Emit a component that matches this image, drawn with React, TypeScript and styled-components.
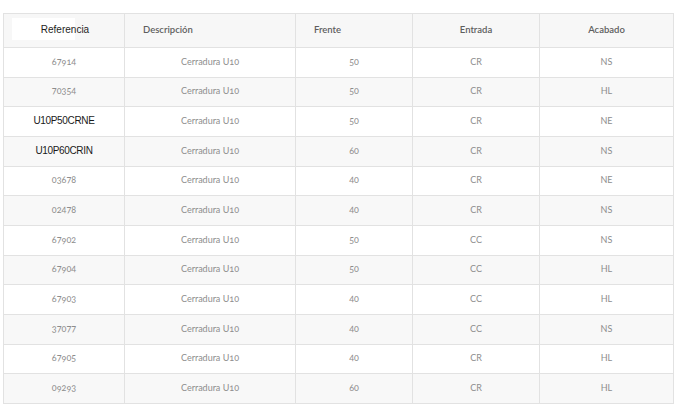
import React from "react";
import styled, { createGlobalStyle } from "styled-components";

type Item = {
  ref: string;
  desc: string;
  frente: string;
  entrada: string;
  acabado: string;
  code?: boolean;
};

const items: Item[] = [
  { ref: "67914", desc: "Cerradura U10", frente: "50", entrada: "CR", acabado: "NS" },
  { ref: "70354", desc: "Cerradura U10", frente: "50", entrada: "CR", acabado: "HL" },
  { ref: "U10P50CRNE", desc: "Cerradura U10", frente: "50", entrada: "CR", acabado: "NE", code: true },
  { ref: "U10P60CRIN", desc: "Cerradura U10", frente: "60", entrada: "CR", acabado: "NS", code: true },
  { ref: "03678", desc: "Cerradura U10", frente: "40", entrada: "CR", acabado: "NE" },
  { ref: "02478", desc: "Cerradura U10", frente: "40", entrada: "CR", acabado: "NS" },
  { ref: "67902", desc: "Cerradura U10", frente: "50", entrada: "CC", acabado: "NS" },
  { ref: "67904", desc: "Cerradura U10", frente: "50", entrada: "CC", acabado: "HL" },
  { ref: "67903", desc: "Cerradura U10", frente: "40", entrada: "CC", acabado: "HL" },
  { ref: "37077", desc: "Cerradura U10", frente: "40", entrada: "CC", acabado: "NS" },
  { ref: "67905", desc: "Cerradura U10", frente: "40", entrada: "CR", acabado: "HL" },
  { ref: "09293", desc: "Cerradura U10", frente: "60", entrada: "CR", acabado: "HL" },
];

const GlobalStyle = createGlobalStyle`
  html, body {
    margin: 0;
    background: #ffffff;
  }
  body {
    padding: 13px 4px 0 3px;
    font-family: Lato, "Open Sans", sans-serif;
  }
`;

const Table = styled.table`
  width: 670px;
  border-collapse: collapse;
  table-layout: fixed;
  border: 1px solid #e2e2e2;
`;

const HeadRow = styled.tr`
  height: 34px;
  background: #f7f7f7;
`;

const HeadCell = styled.th<{ $align?: "left" | "center" }>`
  border: 1px solid #e2e2e2;
  padding: 0 0 2px ${(p) => (p.$align === "left" ? "18px" : "0")};
  text-align: ${(p) => p.$align ?? "center"};
  font-family: Lato, sans-serif;
  font-size: 9.5px;
  font-weight: 600;
  color: #5e5e5e;
`;

// white patch behind the first header label, narrower than the text itself
const RefLabel = styled.span`
  position: relative;
  display: inline-block;
  margin-left: 2px;
  font-family: "Liberation Sans", Arial, sans-serif;
  font-size: 10px;
  font-weight: 400;
  color: #1e1e1e;
  z-index: 0;

  &::before {
    content: "";
    position: absolute;
    left: -29px;
    top: -6px;
    width: 63px;
    height: 22px;
    background: #ffffff;
    z-index: -1;
  }
`;

const Row = styled.tr<{ $shaded: boolean }>`
  height: 29.67px;
  background: ${(p) => (p.$shaded ? "#f8f8f8" : "#ffffff")};
`;

const Cell = styled.td`
  border: 1px solid #e2e2e2;
  padding: 0 0 2px;
  text-align: center;
  font-size: 9px;
  font-weight: 400;
  color: #8d8d8d;
  font-variant-numeric: oldstyle-nums;
  font-feature-settings: "onum" 1;
`;

const Code = styled.span`
  font-family: "Liberation Sans", Arial, sans-serif;
  font-size: 10px;
  letter-spacing: -0.35px;
  font-weight: 400;
  color: #1a1a1a;
`;

export default function App() {
  return (
    <>
      <GlobalStyle />
      <Table>
        <colgroup>
          <col style={{ width: 121 }} />
          <col style={{ width: 171 }} />
          <col style={{ width: 117 }} />
          <col style={{ width: 127 }} />
          <col style={{ width: 134 }} />
        </colgroup>
        <thead>
          <HeadRow>
            <HeadCell>
              <RefLabel>Referencia</RefLabel>
            </HeadCell>
            <HeadCell $align="left">Descripción</HeadCell>
            <HeadCell $align="left">Frente</HeadCell>
            <HeadCell>Entrada</HeadCell>
            <HeadCell>Acabado</HeadCell>
          </HeadRow>
        </thead>
        <tbody>
          {items.map((it, i) => (
            <Row key={it.ref} $shaded={i % 2 === 1}>
              <Cell>{it.code ? <Code>{it.ref}</Code> : it.ref}</Cell>
              <Cell>{it.desc}</Cell>
              <Cell>{it.frente}</Cell>
              <Cell>{it.entrada}</Cell>
              <Cell>{it.acabado}</Cell>
            </Row>
          ))}
        </tbody>
      </Table>
    </>
  );
}
